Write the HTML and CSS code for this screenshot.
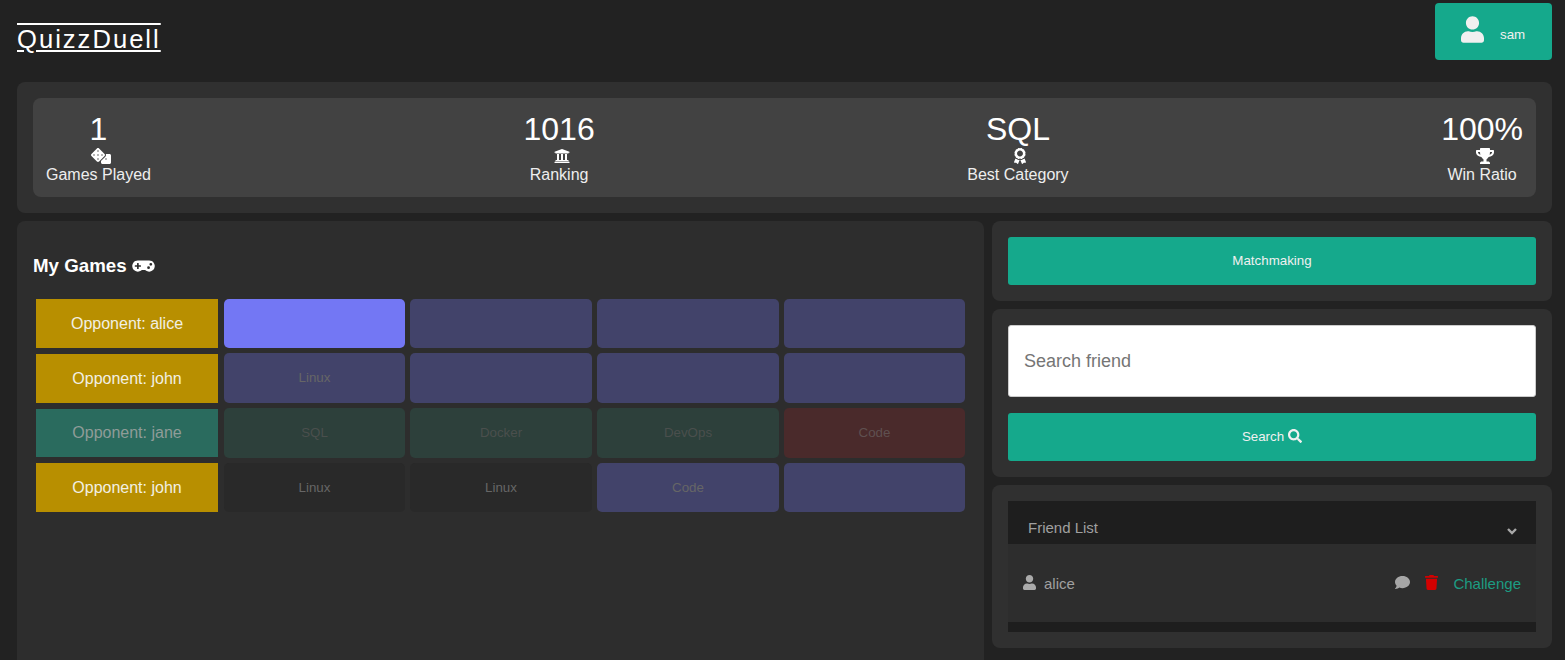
FILE: index.html
```html
<!DOCTYPE html>
<html lang="en">
<head>
    <meta charset="UTF-8">
    <meta name="viewport" content="width=device-width, initial-scale=1.0">
    <title>QuizzDuell</title>
    <link rel="stylesheet" href="styles.css">
</head>
<body>
    <svg class="icon-defs" aria-hidden="true">
        <symbol id="icon-user" viewBox="0 0 448 512"><path d="M224 256c70.7 0 128-57.3 128-128S294.7 0 224 0 96 57.3 96 128s57.3 128 128 128zm89.6 32h-16.7c-22.2 10.2-46.9 16-72.9 16s-50.6-5.8-72.9-16h-16.7C60.2 288 0 348.2 0 422.4V464c0 26.5 21.5 48 48 48h352c26.5 0 48-21.5 48-48v-41.6c0-74.2-60.2-134.4-134.4-134.4z"/></symbol>
    </svg>

    <header class="topbar">
        <h1 class="brand">QuizzDuell</h1>
        <button class="user-btn" type="button">
            <svg class="user-icon"><use href="#icon-user"/></svg>
            <span class="user-name">sam</span>
        </button>
    </header>

    <section class="card stats-card">
        <div class="stats">
            <div class="stat">
                <div class="stat-value">1</div>
                <svg class="stat-icon" viewBox="0 0 640 512" width="20" height="16"><path d="M592 192H473.26c12.69 29.59 7.12 65.2-17 89.32L320 417.58V464c0 26.51 21.49 48 48 48h224c26.51 0 48-21.49 48-48V240c0-26.51-21.49-48-48-48zM480 376c-13.25 0-24-10.75-24-24 0-13.26 10.75-24 24-24s24 10.74 24 24c0 13.25-10.75 24-24 24zm-46.37-186.7L258.7 14.37c-19.16-19.16-50.23-19.16-69.39 0L14.37 189.3c-19.16 19.16-19.16 50.23 0 69.39L189.3 433.63c19.16 19.16 50.23 19.16 69.39 0L433.63 258.7c19.16-19.17 19.16-50.24 0-69.4zM96 248c-13.25 0-24-10.75-24-24 0-13.26 10.75-24 24-24s24 10.74 24 24c0 13.25-10.75 24-24 24zm128 128c-13.25 0-24-10.75-24-24 0-13.26 10.75-24 24-24s24 10.74 24 24c0 13.25-10.75 24-24 24zm0-128c-13.25 0-24-10.75-24-24 0-13.26 10.75-24 24-24s24 10.74 24 24c0 13.25-10.75 24-24 24zm0-128c-13.25 0-24-10.75-24-24 0-13.26 10.75-24 24-24s24 10.74 24 24c0 13.25-10.75 24-24 24zm128 128c-13.25 0-24-10.75-24-24 0-13.26 10.75-24 24-24s24 10.74 24 24c0 13.25-10.75 24-24 24z"/></svg>
                <div class="stat-label">Games Played</div>
            </div>
            <div class="stat">
                <div class="stat-value">1016</div>
                <svg class="stat-icon" viewBox="0 0 512 512" width="16" height="16"><path d="M496 128v16a8 8 0 0 1-8 8h-24v12c0 6.627-5.373 12-12 12H60c-6.627 0-12-5.373-12-12v-12H24a8 8 0 0 1-8-8v-16a8 8 0 0 1 4.941-7.392l232-88a7.996 7.996 0 0 1 6.118 0l232 88A8 8 0 0 1 496 128zm-24 304H40c-13.255 0-24 10.745-24 24v16a8 8 0 0 0 8 8h464a8 8 0 0 0 8-8v-16c0-13.255-10.745-24-24-24zM96 192v192H60c-6.627 0-12 5.373-12 12v20h416v-20c0-6.627-5.373-12-12-12h-36V192h-64v192h-64V192h-64v192h-64V192H96z"/></svg>
                <div class="stat-label">Ranking</div>
            </div>
            <div class="stat">
                <div class="stat-value">SQL</div>
                <svg class="stat-icon" viewBox="0 0 384 512" width="12" height="16"><path d="M97.12 362.63c-8.69-8.69-4.16-6.24-25.12-11.85-9.51-2.55-17.87-7.45-25.43-13.32L1.2 448.7c-4.39 10.77 3.81 22.47 15.43 22.03l52.69-2.01L105.56 507c8 8.44 22.04 5.81 26.43-4.96l52.05-127.62c-10.84 6.04-22.87 9.58-35.31 9.58-19.5 0-37.82-7.59-51.61-21.37zM382.8 448.7l-45.37-111.24c-7.56 5.88-15.92 10.77-25.43 13.32-21.07 5.64-16.45 3.18-25.12 11.85-13.79 13.78-32.12 21.37-51.62 21.37-12.44 0-24.47-3.55-35.31-9.58L252 502.04c4.39 10.77 18.44 13.4 26.43 4.96l36.25-38.28 52.69 2.01c11.62.44 19.82-11.27 15.43-22.03zM263 340c15.28-15.55 17.03-14.21 38.79-20.14 13.89-3.79 24.75-14.84 28.47-28.98 7.48-28.4 5.54-24.97 25.95-45.75 10.17-10.35 14.14-25.44 10.42-39.58-7.47-28.38-7.48-24.42 0-52.83 3.72-14.14-.25-29.23-10.42-39.58-20.41-20.78-18.47-17.36-25.95-45.75-3.72-14.14-14.58-25.19-28.47-28.98-27.88-7.61-24.52-5.62-44.95-26.41-10.17-10.35-25-14.4-38.89-10.61-27.87 7.6-23.98 7.61-51.9 0-13.89-3.79-28.72.25-38.89 10.61-20.41 20.78-17.05 18.8-44.94 26.41-13.89 3.79-24.75 14.84-28.47 28.98-7.47 28.39-5.54 24.97-25.95 45.75-10.17 10.35-14.15 25.44-10.42 39.58 7.47 28.36 7.48 24.4 0 52.82-3.72 14.14.25 29.23 10.42 39.59 20.41 20.78 18.47 17.35 25.95 45.75 3.72 14.14 14.58 25.19 28.47 28.98C104.6 325.96 106.27 325 121 340c13.23 13.47 33.84 15.88 49.74 5.82a39.676 39.676 0 0 1 42.53 0c15.89 10.06 36.5 7.65 49.73-5.82zM97.66 175.96c0-53.03 42.24-96.02 94.34-96.02s94.34 42.99 94.34 96.02-42.24 96.02-94.34 96.02-94.34-42.99-94.34-96.02z"/></svg>
                <div class="stat-label">Best Category</div>
            </div>
            <div class="stat">
                <div class="stat-value">100%</div>
                <svg class="stat-icon" viewBox="0 0 576 512" width="18" height="16"><path d="M552 64H448V24c0-13.3-10.7-24-24-24H152c-13.3 0-24 10.7-24 24v40H24C10.7 64 0 74.7 0 88v56c0 35.7 22.5 72.4 61.9 100.7 31.5 22.7 69.8 37.1 110 41.7C203.3 338.5 240 360 240 360v72h-48c-35.3 0-64 20.7-64 56v12c0 6.6 5.4 12 12 12h296c6.6 0 12-5.4 12-12v-12c0-35.3-28.7-56-64-56h-48v-72s36.7-21.5 68.1-73.6c40.3-4.6 78.6-19 110-41.7 39.3-28.3 61.9-65 61.9-100.7V88c0-13.3-10.7-24-24-24zM99.3 192.8C74.9 175.2 64 155.6 64 144v-16h64.2c1 32.6 5.8 61.2 12.8 86.2-15.1-5.2-29.2-12.4-41.7-21.4zM512 144c0 16.1-17.7 36.1-35.3 48.8-12.5 9-26.7 16.2-41.8 21.4 7-25 11.8-53.6 12.8-86.2H512v16z"/></svg>
                <div class="stat-label">Win Ratio</div>
            </div>
        </div>
    </section>

    <main class="content">
        <section class="card games-card">
            <h2 class="games-title">My Games
                <svg class="games-icon" viewBox="0 0 640 512" width="23" height="18"><path d="M480.07 96H160a160 160 0 1 0 114.24 272h91.52A160 160 0 1 0 480.07 96zM248 268a12 12 0 0 1-12 12h-52v52a12 12 0 0 1-12 12h-24a12 12 0 0 1-12-12v-52H84a12 12 0 0 1-12-12v-24a12 12 0 0 1 12-12h52v-52a12 12 0 0 1 12-12h24a12 12 0 0 1 12 12v52h52a12 12 0 0 1 12 12zm216 76a40 40 0 1 1 40-40 40 40 0 0 1-40 40zm64-96a40 40 0 1 1 40-40 40 40 0 0 1-40 40z"/></svg>
            </h2>
            <div class="games-grid">
                <div class="opponent">Opponent: alice</div>
                <div class="round round-active"></div>
                <div class="round round-open"></div>
                <div class="round round-open"></div>
                <div class="round round-open"></div>

                <div class="opponent opponent-inset-top">Opponent: john</div>
                <div class="round round-open round-tall">Linux</div>
                <div class="round round-open"></div>
                <div class="round round-open"></div>
                <div class="round round-open"></div>

                <div class="opponent opponent-done">Opponent: jane</div>
                <div class="round round-won round-tall">SQL</div>
                <div class="round round-won round-tall">Docker</div>
                <div class="round round-won round-tall">DevOps</div>
                <div class="round round-lost round-tall">Code</div>

                <div class="opponent">Opponent: john</div>
                <div class="round round-dark">Linux</div>
                <div class="round round-dark">Linux</div>
                <div class="round round-open">Code</div>
                <div class="round round-open"></div>
            </div>
        </section>

        <aside class="side">
            <section class="card side-card">
                <button class="btn-teal" type="button">Matchmaking</button>
            </section>

            <section class="card side-card search-card">
                <input class="search-input" type="text" placeholder="Search friend">
                <button class="btn-teal" type="button">Search
                    <svg class="search-icon" viewBox="0 0 512 512" width="14" height="14"><path d="M505 442.7L405.3 343c-4.5-4.5-10.6-7-17-7H372c27.6-35.3 44-79.7 44-128C416 93.1 322.9 0 208 0S0 93.1 0 208s93.1 208 208 208c48.3 0 92.7-16.4 128-44v16.3c0 6.4 2.5 12.5 7 17l99.7 99.7c9.4 9.4 24.6 9.4 33.9 0l28.3-28.3c9.4-9.4 9.4-24.6.1-34zM208 336c-70.7 0-128-57.2-128-128 0-70.7 57.2-128 128-128 70.7 0 128 57.2 128 128 0 70.7-57.2 128-128 128z"/></svg>
                </button>
            </section>

            <section class="card side-card">
                <div class="friends">
                    <div class="friends-head">
                        <span>Friend List</span>
                        <svg class="chevron" viewBox="0 0 10 7" width="10" height="7"><polyline points="1,1 5,5 9,1"/></svg>
                    </div>
                    <div class="friend-row">
                        <svg class="friend-icon"><use href="#icon-user"/></svg>
                        <span class="friend-name">alice</span>
                        <svg class="chat-icon" viewBox="0 0 512 512" width="15" height="15"><path d="M256 32C114.6 32 0 125.1 0 240c0 49.6 21.4 95 57 130.7C44.5 421.1 2.7 466 2.2 466.5c-2.2 2.3-2.8 5.7-1.5 8.7S4.8 480 8 480c66.3 0 116-31.8 140.6-51.4 32.7 12.3 69 19.4 107.4 19.4 141.4 0 256-93.1 256-208S397.4 32 256 32z"/></svg>
                        <svg class="trash-icon" viewBox="0 0 448 512" width="13" height="15"><path d="M432 32H312l-9.4-18.7A24 24 0 0 0 281.1 0H166.8a23.72 23.72 0 0 0-21.4 13.3L136 32H16A16 16 0 0 0 0 48v32a16 16 0 0 0 16 16h416a16 16 0 0 0 16-16V48a16 16 0 0 0-16-16zM53.2 467a48 48 0 0 0 47.9 45h245.8a48 48 0 0 0 47.9-45L416 128H32z"/></svg>
                        <span class="challenge">Challenge</span>
                    </div>
                </div>
            </section>
        </aside>
    </main>
</body>
</html>
```

FILE: styles.css
```css
html, body {
    height: 660px;
    overflow: hidden;
}
body {
    margin: 0;
    padding: 0 13px 0 17px;
    background-color: #222222;
    color: #ffffff;
    font-family: "Liberation Sans", Arial, sans-serif;
}
svg {
    fill: currentColor;
    display: block;
}
.icon-defs {
    display: none;
}

/* top bar */
.topbar {
    display: flex;
    justify-content: space-between;
    align-items: flex-start;
    height: 82px;
}
.brand {
    margin: 25px 0 0;
    font-size: 25.6px;
    font-weight: 400;
    line-height: 29px;
    letter-spacing: 2px;
    text-decoration: underline overline;
}
.user-btn {
    display: flex;
    align-items: flex-start;
    gap: 16px;
    width: 117px;
    height: 57px;
    margin-top: 3px;
    padding: 13px 0 0 26px;
    border: none;
    border-radius: 4px;
    background-color: #15a98c;
    color: #f0f0f0;
    font: 13.33px "Liberation Sans", Arial, sans-serif;
}
.user-icon {
    width: 23px;
    height: 27px;
}
.user-name {
    margin-top: 11px;
}

/* cards */
.card {
    background-color: #303030;
    border-radius: 8px;
    padding: 16px;
}
.stats {
    display: flex;
    justify-content: space-between;
    padding: 13px;
    border-radius: 8px;
    background-color: #424242;
}
.stat {
    display: flex;
    flex-direction: column;
    align-items: center;
}
.stat-value {
    font-size: 32px;
    line-height: 37px;
}
.stat-icon {
    margin-left: 5px;
}
.stat-label {
    margin-top: 2px;
    font-size: 16px;
    line-height: 18px;
    color: #eeeeee;
}

/* main area */
.content {
    display: grid;
    grid-template-columns: 967px 1fr;
    gap: 8px;
    align-items: start;
    margin-top: 8px;
}
.games-card {
    min-height: 500px;
    padding-top: 0;
    background-color: #2d2d2d;
}
.games-title {
    display: flex;
    align-items: center;
    gap: 5px;
    margin: 0 0 22px;
    padding-top: 34px;
    font-size: 18.72px;
    line-height: 22px;
}
.games-grid {
    display: grid;
    grid-template-columns: 183px 181px 182px 182px 181px;
    grid-template-rows: 49px 50px 50px 49px;
    gap: 5px;
    padding: 0 3px;
}
.opponent {
    display: flex;
    align-items: center;
    justify-content: center;
    margin-right: 1px;
    background-color: #b88f00;
    color: #f2f0e4;
    font-size: 16px;
}
.opponent-inset-top {
    margin-top: 1px;
}
.opponent-done {
    margin-top: 1px;
    margin-bottom: 1px;
    background-color: #2a6b5e;
    color: #8f9c98;
}
.round {
    display: flex;
    align-items: center;
    justify-content: center;
    border-radius: 5px;
    font-size: 13.33px;
    color: #666666;
}
.round-tall {
    padding-bottom: 2px;
}
.round-active {
    background-color: #7377f4;
}
.round-open {
    background-color: #42436a;
}
.round-won {
    background-color: #2d403b;
    color: #4a4f4d;
}
.round-lost {
    background-color: #4a2a2b;
    color: #5f5050;
}
.round-dark {
    background-color: #292929;
}

/* right column */
.side {
    display: flex;
    flex-direction: column;
    gap: 8px;
}
.btn-teal {
    display: flex;
    align-items: center;
    justify-content: center;
    gap: 4px;
    width: 100%;
    height: 48px;
    padding: 0 0 2px;
    border: none;
    border-radius: 3px;
    background-color: #15a98c;
    color: #f0f0f0;
    font: 13.33px "Liberation Sans", Arial, sans-serif;
}
.search-card {
    display: flex;
    flex-direction: column;
    gap: 16px;
}
.search-input {
    box-sizing: border-box;
    width: 100%;
    height: 72px;
    padding: 0 15px;
    border: 1px solid #cccccc;
    border-radius: 3px;
    background-color: #ffffff;
    font: 18px "Liberation Sans", Arial, sans-serif;
}
.search-input::placeholder {
    color: #757575;
}
.friends {
    background-color: #1e1e1e;
    padding-bottom: 10px;
}
.friends-head {
    display: flex;
    justify-content: space-between;
    align-items: flex-end;
    box-sizing: border-box;
    height: 43px;
    padding: 0 19px 7px 20px;
    font-size: 15px;
    line-height: 18px;
    color: #a0a0a0;
}
.chevron {
    margin-bottom: 2px;
    fill: none;
    stroke: #a8a8a8;
    stroke-width: 2.4;
}
.friend-row {
    display: flex;
    align-items: center;
    height: 78px;
    padding: 0 15px;
    background-color: #2d2d2d;
    font-size: 15px;
    color: #a0a0a0;
}
.friend-icon {
    width: 13px;
    height: 15px;
    margin-top: -2px;
    color: #aaaaaa;
}
.friend-name {
    margin-left: 8px;
    margin-right: auto;
}
.chat-icon {
    margin-top: -2px;
    color: #a6a6a6;
}
.trash-icon {
    margin-top: -2px;
    margin-left: 15px;
    color: #d40000;
}
.challenge {
    margin-left: 15px;
    color: #1c9c83;
}
```
